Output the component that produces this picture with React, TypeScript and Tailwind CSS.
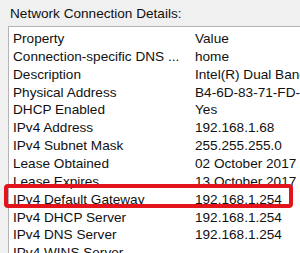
const rows: [string, string][] = [
	['Property', 'Value'],
	['Connection-specific DNS ...', 'home'],
	['Description', 'Intel(R) Dual Band Wireless-AC 8260'],
	['Physical Address', 'B4-6D-83-71-FD-6C'],
	['DHCP Enabled', 'Yes'],
	['IPv4 Address', '192.168.1.68'],
	['IPv4 Subnet Mask', '255.255.255.0'],
	['Lease Obtained', '02 October 2017 09:14:22'],
	['Lease Expires', '13 October 2017 09:14:22'],
	['IPv4 Default Gateway', '192.168.1.254'],
	['IPv4 DHCP Server', '192.168.1.254'],
	['IPv4 DNS Server', '192.168.1.254'],
	['IPv4 WINS Server', ''],
];

const App = () => {
	return (
		<div
			className="relative h-[253px] w-[300px] overflow-hidden bg-[#f0f0f0] text-[13.6px] text-[#111]"
			style={{ fontFamily: '"Liberation Sans", Arial, sans-serif' }}
		>
			<div className="pl-[10px] pt-[5px] leading-[18px]">Network Connection Details:</div>

			<div className="ml-[8px] mt-[3px] w-[400px] border-l border-t border-[#b4b4b4] bg-white pl-[4px] pt-[2px]">
				<ul className="flex flex-col">
					{rows.map(([name, value]) => (
						<li key={name} className="grid h-[17.86px] grid-cols-[182px_1fr] items-center whitespace-nowrap">
							<span>{name}</span>
							<span>{value}</span>
						</li>
					))}
				</ul>
			</div>

			<div className="absolute left-[4px] top-[184px] h-[24px] w-[289px] rounded-[4px] border-4 border-[#e3141b]" />
		</div>
	);
};

export default App;
